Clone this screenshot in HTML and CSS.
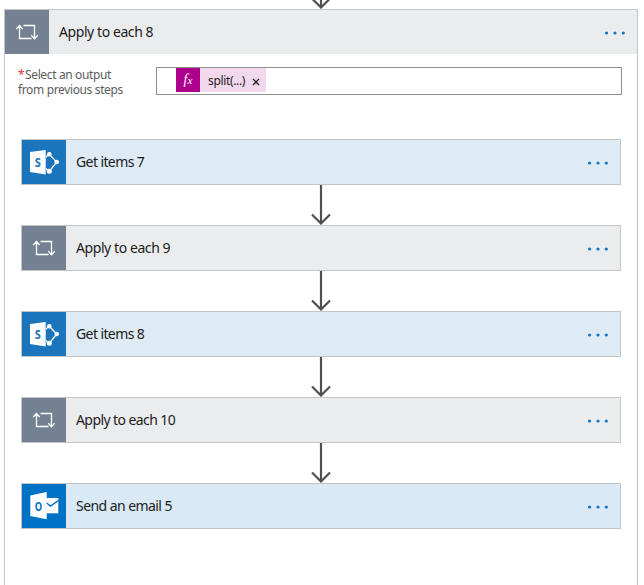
FILE: index.html
```html
<!DOCTYPE html>
<html lang="en">
<head>
<meta charset="utf-8">
<title>Flow</title>
<link rel="stylesheet" href="styles.css">
</head>
<body>
<svg class="defs" width="0" height="0">
  <symbol id="loop" viewBox="0 0 44 44">
    <path d="M14.500 16v12.500h12M18.500 15.500h11v12.500M11.300 19l3.200-3.500 3.200 3.500M26.300 25.200l3.200 3.500 3.200-3.500" fill="none" stroke="#fff" stroke-width="1.300"/>
  </symbol>
  <symbol id="sharepoint" viewBox="0 0 44 44">
    <path d="M27.300 14.300l7.400 7.700-7.400 9.300M27.300 14.300c-2 1-2.800 2-3.300 3M27.300 31.300c-1.500-.5-2.500-1.500-3.300-3" fill="none" stroke="#fff" stroke-width="1.300"/>
    <path d="M8 12l15.700-2v24.500l-15.700-2.500z" fill="#fff"/>
    <circle cx="27.300" cy="14.300" r="2.300" fill="#fff"/><circle cx="34.700" cy="22" r="2.300" fill="#fff"/><circle cx="27.300" cy="31.300" r="2.500" fill="#fff"/>
  </symbol>
  <symbol id="outlook" viewBox="0 0 44 44">
    <path d="M24 14h12.300v15.300h-12.300z" fill="#fff"/>
    <path d="M24 18.500l4.500 3.500 8-5.500" fill="none" stroke="#0072c6" stroke-width="1.500"/>
    <path d="M8.300 11.500l16.400-3.500v27.300l-16.400-3.300z" fill="#fff"/>
  </symbol>
  <symbol id="arrow" viewBox="0 0 22 40">
    <path d="M11 0v38M2 29.500l9 9 9-9" fill="none" stroke="#505050" stroke-width="2.200"/>
  </symbol>
  <symbol id="dots" viewBox="0 0 22 6">
    <g fill="#1673c1"><circle cx="2.600" cy="3" r="1.600"/><circle cx="11" cy="3" r="1.600"/><circle cx="19.300" cy="3" r="1.600"/></g>
  </symbol>
</svg>
<div class="incoming"><svg class="arrow"><use href="#arrow"/></svg></div>
<main class="scope">
  <header class="head gray">
    <svg class="tile slate"><use href="#loop"/></svg>
    <span class="title">Apply to each 8</span>
    <svg class="dots"><use href="#dots"/></svg>
  </header>
  <div class="field">
    <div class="label"><div class="line"><span class="star">*</span><span>Select an output</span></div><div class="line">from previous steps</div></div>
    <div class="input"><div class="chip"><span class="fx">f<small>x</small></span><span class="expr">split(...)</span><svg class="close" viewBox="0 0 8 8"><path d="M1 1l6 6M7 1l-6 6" stroke="#222" stroke-width="1.300"/></svg></div></div>
  </div>
  <div class="steps">
    <div class="card blue"><svg class="tile sharepoint"><use href="#sharepoint"/><text transform="translate(15.700 27) scale(.85 1)" class="glyph sp">S</text></svg><span class="title items">Get items 7</span><svg class="dots"><use href="#dots"/></svg></div>
    <svg class="arrow"><use href="#arrow"/></svg>
    <div class="card gray"><svg class="tile slate"><use href="#loop"/></svg><span class="title">Apply to each 9</span><svg class="dots"><use href="#dots"/></svg></div>
    <svg class="arrow"><use href="#arrow"/></svg>
    <div class="card blue"><svg class="tile sharepoint"><use href="#sharepoint"/><text transform="translate(15.700 27) scale(.85 1)" class="glyph sp">S</text></svg><span class="title items">Get items 8</span><svg class="dots"><use href="#dots"/></svg></div>
    <svg class="arrow"><use href="#arrow"/></svg>
    <div class="card gray"><svg class="tile slate"><use href="#loop"/></svg><span class="title ten">Apply to each 10</span><svg class="dots"><use href="#dots"/></svg></div>
    <svg class="arrow"><use href="#arrow"/></svg>
    <div class="card mail"><svg class="tile outlook"><use href="#outlook"/><text transform="translate(16.500 26.500) scale(.72 1)" class="glyph ol">O</text></svg><span class="title email">Send an email 5</span><svg class="dots"><use href="#dots"/></svg></div>
  </div>
</main>
</body>
</html>
```
FILE: styles.css
```css
* { box-sizing: border-box; }
body { margin: 0; height: 585px; overflow: hidden; background: #fff; color: #1c1c1c; font-family: "Segoe UI", "Noto Sans", sans-serif; }
svg { display: block; flex: none; }
.defs { position: absolute; }
.incoming { height: 9px; width: 634px; margin-left: 4px; display: flex; justify-content: center; align-items: flex-end; overflow: hidden; }
.arrow { width: 22px; height: 40px; }
.scope { width: 634px; height: 600px; margin-left: 4px; border: 1px solid #c3c4c5; }
.head { height: 44px; display: flex; align-items: center; padding-right: 11px; }
.gray { background: #ebecee; }
.blue { background: #deebf4; }
.mail { background: #d9eaf6; }
.tile { width: 44px; height: 44px; }
.slate { background: #748192; }
.sharepoint { background: #1b75bc; }
.outlook { background: #0072c6; }
.title { flex: 1; padding-left: 10px; font-size: 14px; line-height: 20px; white-space: nowrap; letter-spacing: -0.42px; }
.items { letter-spacing: -0.6px; }
.ten { letter-spacing: -0.58px; }
.email { letter-spacing: -0.56px; }
.dots { width: 22px; height: 6px; margin-top: 2px; }
.field { display: flex; padding: 13px 15px 0 13px; }
.label { width: 138px; font-size: 12px; color: #5c5c5c; white-space: nowrap; letter-spacing: -0.36px; }
.line { display: flex; height: 15px; line-height: 15px; }
.star { color: #d6303e; width: 7px; }
.input { width: 466px; height: 28px; border: 1px solid #8f8f8f; padding-left: 19px; }
.chip { width: 90px; height: 24px; display: flex; align-items: center; background: #f2d8ec; }
.fx { width: 24px; height: 24px; background: #ad008c; color: #fff; font: italic 14px/23px "Liberation Serif", serif; text-align: center; }
.fx small { font-size: 11px; }
.expr { width: 52px; padding: 2px 0 0 8px; font-size: 12px; line-height: 24px; letter-spacing: -0.35px; }
.close { width: 8px; height: 8px; margin-top: 3px; }
.steps { padding: 42px 16px 0; display: flex; flex-direction: column; align-items: center; }
.card { width: 600px; height: 46px; border: 1px solid #c3c4c5; display: flex; align-items: center; padding-right: 11px; }
.glyph { font-family: "Noto Sans", sans-serif; font-weight: 700; font-size: 13px; text-anchor: middle; }
.sp { fill: #1b75bc; }
.ol { fill: #0072c6; }
```
